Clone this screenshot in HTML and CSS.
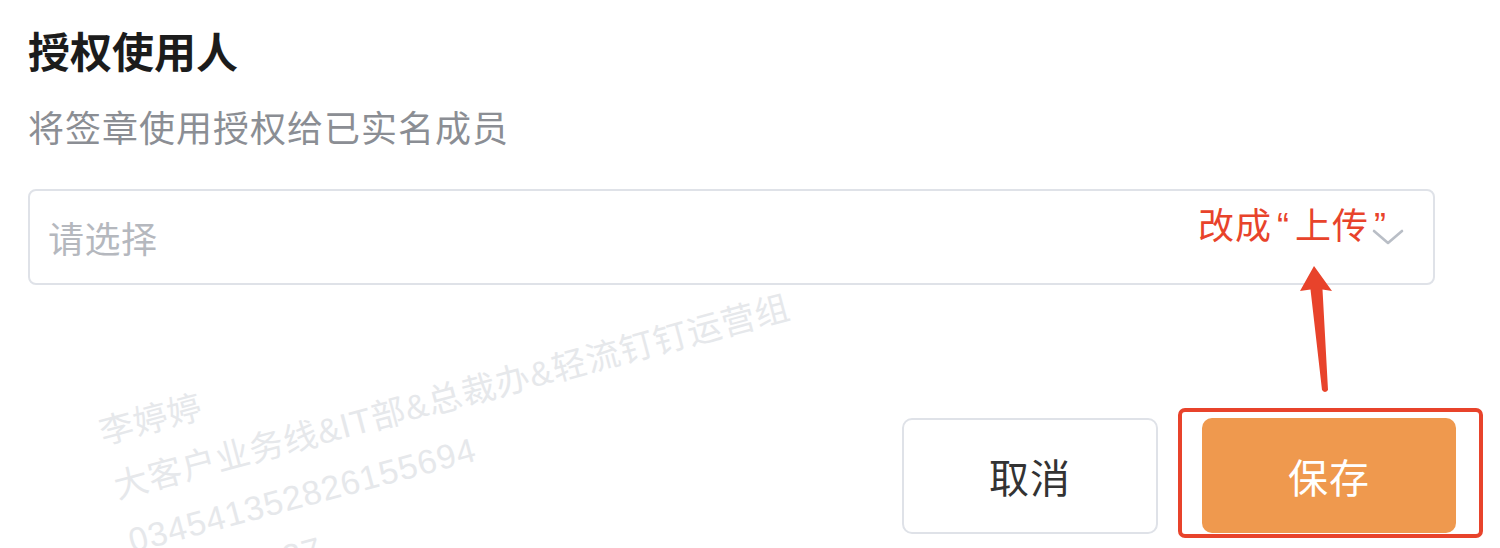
FILE: index.html
```html
<!DOCTYPE html>
<html lang="zh-CN">
<head>
<meta charset="utf-8">
<title>授权使用人</title>
<link rel="stylesheet" href="styles.css">
</head>
<body>
<div class="page">
  <div class="watermark">
    <div class="wm-line">李婷婷</div>
    <div class="wm-line">大客户业务线&amp;IT部&amp;总裁办&amp;轻流钉钉运营组</div>
    <div class="wm-line">034541352826155694</div>
    <div class="wm-line">2023-03-27</div>
  </div>

  <h1 class="title">授权使用人</h1>
  <p class="desc">将签章使用授权给已实名成员</p>

  <div class="select">
    <span class="placeholder">请选择</span>
    <svg class="chevron" width="32" height="18" viewBox="0 0 32 18"><path d="M2 3 L16 15 L30 3" fill="none" stroke="#b9bec6" stroke-width="2.6" stroke-linecap="round" stroke-linejoin="round"/></svg>
    <span class="note">改成<span class="q">“</span>上传<span class="q">”</span></span>
  </div>

  <div class="footer">
    <button class="btn cancel">取消</button>
    <button class="btn save">保存<span class="highlight"></span></button>
  </div>

  <svg class="arrow" width="1500" height="548" viewBox="0 0 1500 548">
    <path d="M1314 266 L1332 291 L1322.5 289.5 L1328 390 Q1325 394 1322 390 L1310.5 289.5 L1300 291 Z" fill="#e8432b"/>
  </svg>
</div>
</body>
</html>
```

FILE: styles.css
```css
html, body {
  margin: 0;
  padding: 0;
  background: #ffffff;
}

body {
  width: 1500px;
  height: 548px;
  overflow: hidden;
  font-family: "Noto Sans CJK SC", "Noto Sans", sans-serif;
}

.page {
  position: relative;
  width: 1500px;
  height: 548px;
  box-sizing: border-box;
  padding: 25px 44px 0 28px;
  overflow: hidden;
}

.title {
  margin: 0;
  font-size: 42px;
  line-height: 50px;
  font-weight: 700;
  color: #1c1c1c;
  letter-spacing: 0;
}

.desc {
  margin: 30px 0 0 0;
  font-size: 36px;
  line-height: 42px;
  color: #8b8e94;
  letter-spacing: 1px;
}

.select {
  position: relative;
  margin-top: 42px;
  width: 1407px;
  height: 96px;
  box-sizing: border-box;
  border: 2px solid #dfe2e8;
  border-radius: 8px;
  display: flex;
  align-items: center;
  padding-left: 18px;
}

.placeholder {
  font-size: 36px;
  color: #b5b8be;
  letter-spacing: 0.5px;
}

.chevron {
  position: absolute;
  right: 29px;
  top: 37px;
}

.note {
  position: absolute;
  left: 1168px;
  top: 4px;
  font-size: 36px;
  line-height: 56px;
  color: #e8432b;
  letter-spacing: 1px;
}

.note .q {
  font-family: "Liberation Sans", sans-serif;
  display: inline-block;
  width: 23px;
  text-align: center;
}

.footer {
  margin-top: 133px;
  display: flex;
  justify-content: flex-end;
  gap: 44px;
}

.btn {
  font-family: "Noto Sans CJK SC", "Noto Sans", sans-serif;
  font-size: 40px;
  border-radius: 10px;
  height: 116px;
  padding: 0;
  position: relative;
  letter-spacing: 1px;
}

.cancel {
  width: 256px;
  background: #ffffff;
  border: 2px solid #dfe2e8;
  color: #333333;
}

.save {
  width: 254px;
  height: 115px;
  background: #ef994e;
  border: none;
  color: #ffffff;
}

.highlight {
  position: absolute;
  left: -24px;
  top: -10px;
  right: -27px;
  bottom: -5px;
  border: 4px solid #e8432b;
  border-radius: 7px;
}

.watermark {
  position: absolute;
  left: 93px;
  top: 406px;
  transform-origin: 0 0;
  transform: rotate(-15deg);
  pointer-events: none;
}

.wm-line {
  font-family: "Liberation Sans", "Noto Sans CJK SC", sans-serif;
  font-size: 34px;
  line-height: 56px;
  color: #e6e8eb;
  letter-spacing: 1px;
  white-space: nowrap;
}

.arrow {
  position: absolute;
  left: 0;
  top: 0;
  pointer-events: none;
}
```
